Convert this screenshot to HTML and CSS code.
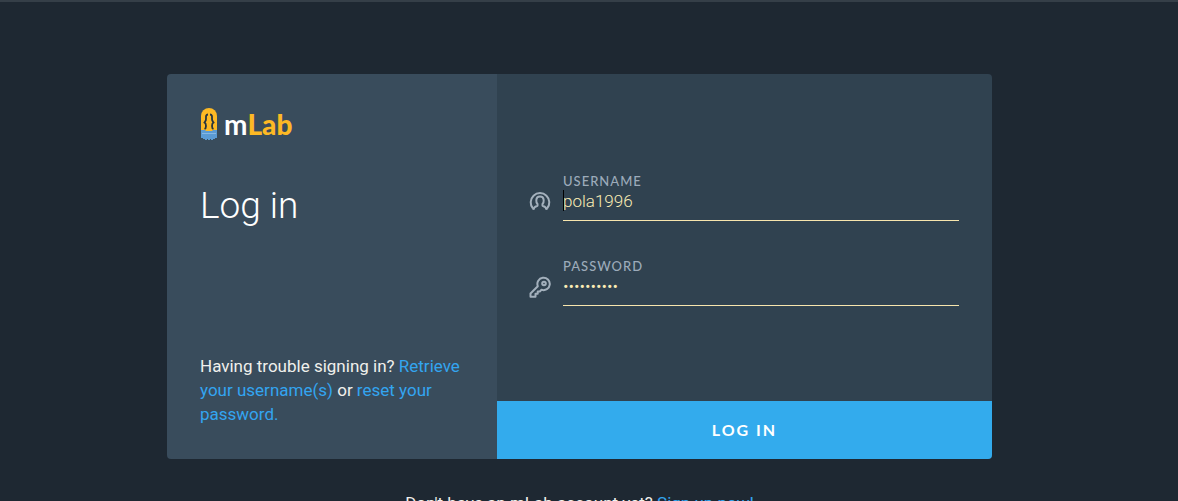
FILE: index.html
```html
<!DOCTYPE html>
<html lang="en">
<head>
<meta charset="utf-8">
<meta name="viewport" content="width=device-width, initial-scale=1">
<title>mLab - Log in</title>
<link rel="stylesheet" href="styles.css">
</head>
<body>
<main class="page">
  <form class="card">
    <section class="intro">
      <div class="brand">
        <svg class="brand-mark" viewBox="0 0 18 34" aria-hidden="true">
          <path d="M1 24V9a8 8 0 0 1 16 0v15z" fill="#fdb924"/>
          <path d="M8 7.500C5.500 7.500 6 10 6 12s-1 2.500-1.500 3.500C5.500 16 6 17 6 19s0 2.500-1.500 3M10 7.500c2.500 0 2 2.500 2 4.500s1 2.500 1.500 3.500C12.500 16 12 17 12 19s0 2.500 1.500 3" fill="none" stroke="#26343f" stroke-width="1.800"/>
          <path d="M1 23h4l1 1h6l1-1h4v8h-2v1h-2v1h-2v-1h-1v1H8v-1H7v1H5v-1H3v-1H1z" fill="#5b9bd5"/>
          <path d="M2 26.500h14" stroke="#85b8e5"/>
        </svg>
        <span class="brand-name">m<b>Lab</b></span>
      </div>
      <h1 class="title">Log in</h1>
      <p class="help">Having trouble signing in? <a href="#">Retrieve your username(s)</a> or <a href="#">reset your password.</a></p>
    </section>
    <section class="entry">
      <div class="fields">
        <div class="field">
          <svg class="field-icon" viewBox="0 0 22 22" aria-hidden="true">
            <path d="M4 17.500A9.300 9.300 0 1 1 18 17.500"/>
            <path d="M4.300 18.800C4.600 16.500 6.300 15.500 8.500 14.800V13C7.500 12 7.200 10.500 7.300 9 7.500 6.900 8.900 5.600 11 5.600s3.500 1.300 3.700 3.400c.1 1.500-.2 3-1.200 4v1.800c2.200.7 3.900 1.700 4.200 4"/>
          </svg>
          <div class="control">
            <label class="label" for="username">USERNAME</label>
            <div class="line"><span class="caret"></span><input class="input" id="username" type="text" value="pola1996"></div>
          </div>
        </div>
        <div class="field">
          <svg class="field-icon" viewBox="0 0 22 22" aria-hidden="true">
            <path d="M1.500 17.500 8.800 10.200A6.200 6.200 0 1 1 12.500 13.800L10.800 15.500H8.700V17.700H6.500V20.700H1.500z"/>
            <circle cx="15" cy="7.500" r="1.800"/>
          </svg>
          <div class="control">
            <label class="label" for="password">PASSWORD</label>
            <div class="line"><input class="input" id="password" type="password" value="abcdefghij"></div>
          </div>
        </div>
      </div>
      <button class="submit" type="submit">LOG IN</button>
    </section>
  </form>
  <p class="signup">Don't have an mLab account yet? <a href="#">Sign up now!</a></p>
</main>
</body>
</html>
```
FILE: styles.css
```css
* { box-sizing: border-box; }
html { background: #1e2832; overflow: hidden; }
body {
  margin: 0;
  border-top: 2px solid #353f48;
  color: #f0f0ec;
  font: 17px/24px Roboto, sans-serif;
}
a { color: #33a5f0; text-decoration: none; }
.page { padding: 72px 19px 24px 0; }
.card {
  display: flex;
  width: 100%;
  max-width: 825px;
  min-height: 385px;
  margin: 0 auto;
  border-radius: 4px;
  overflow: hidden;
}
.intro {
  display: flex;
  flex-direction: column;
  width: 40%;
  padding: 33px;
  background: #394c5c;
}
.brand { display: flex; align-items: center; gap: 6px; height: 34px; }
.brand-mark { width: 18px; height: 34px; }
.brand-name { color: #fff; font: bold 28px/32px Lato, sans-serif; }
.brand-name b { color: #fdb924; }
.title { margin: 41px 0 0; color: #fff; font-size: 37px; font-weight: 300; line-height: 48px; }
.help { margin: auto 0 0; }
.entry { display: flex; flex: 1; flex-direction: column; background: #304250; }
.fields {
  display: flex;
  flex: 1;
  flex-direction: column;
  gap: 36px;
  padding: 98px 33px 32px;
}
.field { display: flex; align-items: flex-end; gap: 12px; }
.field-icon { width: 22px; height: 22px; margin: 0 0 8px -1px; fill: none; stroke: #a3b0bc; stroke-width: 2; stroke-linejoin: round; }
.control { flex: 1; }
.label { display: block; color: #9cabba; font: 500 13px/18px Lato, sans-serif; letter-spacing: 1px; }
.line { position: relative; border-bottom: 1px solid #f7e5ad; }
.input {
  display: block;
  width: 100%;
  height: 30px;
  padding: 0 0 8px;
  border: 0;
  outline: 0;
  background: none;
  color: #faecb5;
  font: 300 17px/22px Roboto, sans-serif;
}
.caret { position: absolute; top: 0; left: 0; width: 1px; height: 21px; background: #000; }
.submit {
  height: 58px;
  border: 0;
  background: #33abed;
  color: #fff;
  font: bold 16px/24px Lato, sans-serif;
  letter-spacing: 2px;
}
.signup { margin: 32px 0 0; text-align: center; }
```
